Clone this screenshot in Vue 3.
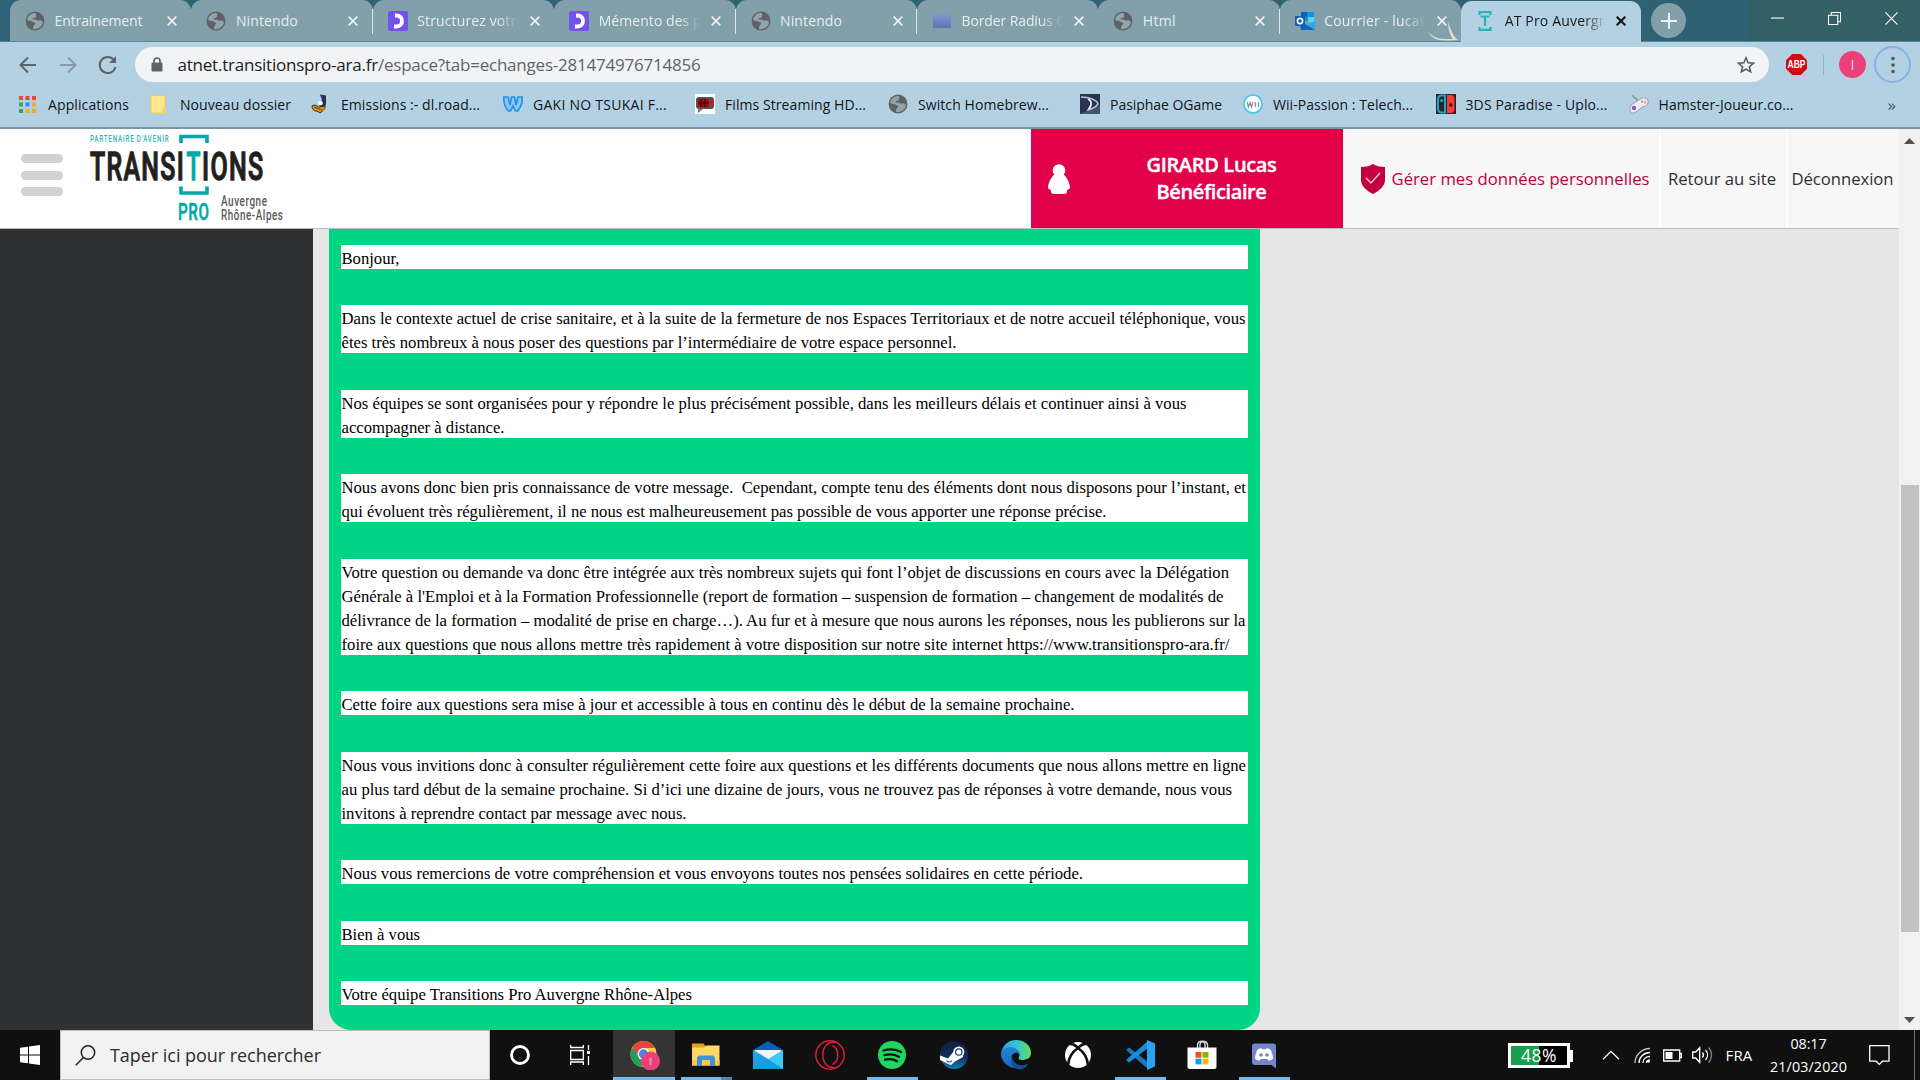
<script setup>
// Spreads letters so that a label takes exactly the given width in pixels.
const vFit = {
  mounted(el, { value }) {
    if (!value) return
    const natural = el.getBoundingClientRect().width
    el.style.letterSpacing = (value - natural) / el.textContent.length + 'px'
  },
}

const tabs = [
  { icon: 'globe', title: 'Entrainement', w: 88 },
  { icon: 'globe', title: 'Nintendo', w: 62 },
  { icon: 'oc', title: 'Structurez votre', w: 107 },
  { icon: 'oc', title: 'Mémento des p', w: 103 },
  { icon: 'globe', title: 'Nintendo', w: 62 },
  { icon: 'square', title: 'Border Radius G', w: 105 },
  { icon: 'globe', title: 'Html', w: 33 },
  { icon: 'outlook', title: 'Courrier - lucas.', w: 106 },
  { icon: 'at', title: 'AT Pro Auvergn', w: 103, active: true },
]

const bookmarks = [
  { icon: 'apps', label: 'Applications', w: 81, span: 132 },
  { icon: 'folder', label: 'Nouveau dossier', w: 111, span: 161 },
  { icon: 'duck', label: 'Emissions :- dl.road...', w: 139, span: 192 },
  { icon: 'w', label: 'GAKI NO TSUKAI F...', w: 134, span: 192 },
  { icon: 'film', label: 'Films Streaming HD...', w: 141, span: 193 },
  { icon: 'globe', label: 'Switch Homebrew...', w: 131, span: 192 },
  { icon: 'ogame', label: 'Pasiphae OGame', w: 112, span: 163 },
  { icon: 'wii', label: 'Wii-Passion : Telech...', w: 140, span: 192.5 },
  { icon: 'switch', label: '3DS Paradise - Uplo...', w: 142, span: 193 },
  { icon: 'pad', label: 'Hamster-Joueur.co...', w: 135, span: 170 },
]

const message = [
  [['Bonjour,', 58]],
  [
    ['Dans le contexte actuel de crise sanitaire, et à la suite de la fermeture de nos Espaces Territoriaux et de notre accueil téléphonique, vous', 904],
    ['êtes très nombreux à nous poser des questions par l’intermédiaire de votre espace personnel.', 615],
  ],
  [
    ['Nos équipes se sont organisées pour y répondre le plus précisément possible, dans les meilleurs délais et continuer ainsi à vous', 845],
    ['accompagner à distance.', 163],
  ],
  [
    ['Nous avons donc bien pris connaissance de votre message.\u00a0 Cependant, compte tenu des éléments dont nous disposons pour l’instant, et', 904.5],
    ['qui évoluent très régulièrement, il ne nous est malheureusement pas possible de vous apporter une réponse précise.', 765],
  ],
  [
    ['Votre question ou demande va donc être intégrée aux très nombreux sujets qui font l’objet de discussions en cours avec la Délégation', 887.5],
    ["Générale à l'Emploi et à la Formation Professionnelle (report de formation – suspension de formation – changement de modalités de", 882],
    ['délivrance de la formation – modalité de prise en charge…). Au fur et à mesure que nous aurons les réponses, nous les publierons sur la', 904],
    ['foire aux questions que nous allons mettre très rapidement à votre disposition sur notre site internet https://www.transitionspro-ara.fr/', 888],
  ],
  [['Cette foire aux questions sera mise à jour et accessible à tous en continu dès le début de la semaine prochaine.', 733]],
  [
    ['Nous vous invitions donc à consulter régulièrement cette foire aux questions et les différents documents que nous allons mettre en ligne', 904.5],
    ['au plus tard début de la semaine prochaine. Si d’ici une dizaine de jours, vous ne trouvez pas de réponses à votre demande, nous vous', 890.5],
    ['invitons à reprendre contact par message avec nous.', 345],
  ],
  [['Nous vous remercions de votre compréhension et vous envoyons toutes nos pensées solidaires en cette période.', 741.5]],
  [['Bien à vous', 78.5]],
  [['Votre équipe Transitions Pro Auvergne Rhône-Alpes', 350.5]],
]

const tasks = ['chrome', 'explorer', 'mail', 'opera', 'spotify', 'steam', 'edge', 'xbox', 'vscode', 'store', 'discord']
const running = ['spotify', 'vscode', 'discord']
</script>

<template>
  <div class="screen">
    <svg class="defs" width="0" height="0">
      <defs>
        <linearGradient id="gMail" x1="0" y1="0" x2="1" y2="1"><stop offset="0" stop-color="#22a6ea" /><stop offset="1" stop-color="#1b8fdd" /></linearGradient>
        <linearGradient id="gSteam" x1="0" y1="0" x2="0" y2="1"><stop offset="0" stop-color="#141a3c" /><stop offset=".6" stop-color="#0d3160" /><stop offset="1" stop-color="#1580b8" /></linearGradient>
        <linearGradient id="gEdge" x1="0" y1="0" x2="1" y2="0"><stop offset="0" stop-color="#2aa7e6" /><stop offset=".5" stop-color="#30c4d8" /><stop offset="1" stop-color="#64de5a" /></linearGradient>
        <linearGradient id="gEdge2" x1="0" y1="0" x2="0" y2="1"><stop offset="0" stop-color="#2187d4" /><stop offset="1" stop-color="#1668bd" /></linearGradient>
        <linearGradient id="gSq" x1="0" y1="0" x2="0" y2="1"><stop offset="0" stop-color="#8496d4" /><stop offset="1" stop-color="#5f74b0" /></linearGradient>
        <symbol id="i-globe" viewBox="0 0 18 18">
          <circle cx="9" cy="9" r="8.500" fill="#5f6164" />
          <path d="M9.500 1.800C6 1.500 2.300 4 1.900 8.100c1.400 1 3 .7 4.200 1 .8 1 2.300 1.200 3.200 1.800-.3 1.500-1.700 2-2 3.300l-.1 2c4.900 1 8.800-2.700 9-6.500-1.200-.3-1.600-1.600-2.700-1.400-1 .4-2 .7-3-.1-1.300-1.100-3 .1-3.800-1 .4-1.700 2.400-.8 3.100-1.900.3-1 .5-2.300-.3-3.500z" fill="#8fa4ab" />
        </symbol>
        <symbol id="i-oc" viewBox="0 0 20 20">
          <rect width="20" height="20" rx="2" fill="#7451eb" />
          <path d="M7 4.500h1.500c3.500 0 5.500 2.300 5.500 5.500s-2 5.500-5.500 5.500H6" fill="none" stroke="#fff" stroke-width="3.800" />
        </symbol>
        <symbol id="i-square" viewBox="0 0 20 20"><rect x="1" y="3" width="18" height="14" fill="url(#gSq)" /></symbol>
        <symbol id="i-outlook" viewBox="0 0 20 20">
          <path d="M6 1h13v9H6z" fill="#1490df" /><path d="M6 1h6v5H6z" fill="#0364b8" /><path d="M13 6h6v5h-6z" fill="#50d9ff" />
          <path d="M5 10l7.500 5L20 9.500V18H5z" fill="#28a8ea" /><path d="M5 10l15 9H6z" fill="#1067b5" /><rect y="5" width="10" height="10" rx="1" fill="#0f5fb5" />
          <circle cx="5" cy="10" r="2.600" fill="none" stroke="#fff" stroke-width="1.600" />
        </symbol>
        <symbol id="i-at" viewBox="0 0 20 20"><path d="M4.500 4V1.200h11V4M4.500 16v2.800h11V16M5.500 5.500h9M10 5.500V15" fill="none" stroke="#29b3b6" stroke-width="2.200" /></symbol>
        <symbol id="i-apps" viewBox="0 0 20 20">
          <path d="M1 2h4v4H1zM7.500 2h4v4h-4zM14 2h4v4h-4z" fill="#f4433c" /><path d="M1 8.500h4v4H1z" fill="#34a853" /><path d="M7.500 8.500h4v4h-4z" fill="#2c8cf4" />
          <path d="M14 8.500h4v4h-4zM14 15h4v4h-4zM7.500 15h4v4h-4z" fill="#fba91c" /><path d="M1 15h4v4H1z" fill="#34a853" />
        </symbol>
        <symbol id="i-folder" viewBox="0 0 20 20"><path d="M1 1.500h14v12l1 1V19H1z" fill="#ffe68f" stroke="#eecb5c" /><path d="M12.500 19v-4.500l3-1.500V19z" fill="#f3d16a" /></symbol>
        <symbol id="i-duck" viewBox="0 0 20 20">
          <path d="M9 .5l6 1v8c0 3-2 4-5 4-2-1-2-3-1-5l2-3z" fill="#2e2c53" /><circle cx="9.500" cy="9" r="2.300" fill="#fff" />
          <path d="M1 12c3-2 5 0 7 1l6-1c1 2-2 5-5 7-1-1-3-2-5-2-2-1-3-3-3-5z" fill="#d6941c" stroke="#46300b" /><path d="M3 13l8 3" stroke="#684713" />
        </symbol>
        <symbol id="i-w" viewBox="0 0 20 20"><path d="M1 3h4l2 8 1.500-8h3L13 11l2-8h4c1 5-2 12-4.500 14h-2L10 12l-2.500 5h-2C3 15 0 8 1 3z" fill="#8cc8f8" stroke="#2790e6" stroke-width="1.700" /></symbol>
        <symbol id="i-film" viewBox="0 0 20 20">
          <rect width="20" height="20" fill="#fff" /><rect x="1" y="3" width="18" height="12" rx="3" fill="#5a4e4e" /><path d="M3 14v5l5-4z" fill="#777" />
          <rect x="3" y="5" width="11" height="8" fill="#a10b15" /><path d="M6 5v8M10 5v8M3 9h11" stroke="#2b0508" /><path d="M15 8l4-3v8l-4-3z" fill="#cd1420" />
        </symbol>
        <symbol id="i-ogame" viewBox="0 0 20 20"><rect width="20" height="20" fill="#253551" /><path d="M0 20l20-9v9z" fill="#42536f" /><path d="M1 3c8 0 16 3 17 7-3 4-6 5-10 6l3-5" fill="none" stroke="#b9c6d6" stroke-width="1.500" /><path d="M8 5c4 2 4 6 1 10" fill="none" stroke="#e8eef5" stroke-width="1.800" /></symbol>
        <symbol id="i-wii" viewBox="0 0 20 20"><circle cx="10" cy="10" r="9" fill="#fff" stroke="#37c8f1" stroke-width="1.600" /><path d="M4 8l1.500 5L7 8.500 8.500 13 10 8M12.500 8v5M15.500 8v5" fill="none" stroke="#858d90" stroke-width="1.200" /></symbol>
        <symbol id="i-switch" viewBox="0 0 20 20">
          <rect width="20" height="20" fill="#2b2422" /><path d="M9 1.500H5.500A3.500 3.500 0 0 0 2 5v10a3.500 3.500 0 0 0 3.500 3.500H9z" fill="none" stroke="#18a9d0" stroke-width="2" />
          <path d="M11 1h3.500A4 4 0 0 1 18.500 5v10a4 4 0 0 1-4 4H11z" fill="#fb3b32" /><circle cx="5.700" cy="6.500" r="1.500" fill="#18a9d0" /><circle cx="14.700" cy="11" r="1.800" fill="#2b2422" />
        </symbol>
        <symbol id="i-pad" viewBox="0 0 20 20">
          <path d="M4 1c-1 4 5 2 4 6" fill="none" stroke="#8b9499" stroke-width="1.400" /><path d="M2 11l11-7c4-1 7 2 6 5-1 3-3 3.500-5 3.500l-7 5.500c-3 2-6 1-6-2 0-2 0-4 1-5z" fill="#ececf0" stroke="#9a9da8" />
          <circle cx="5" cy="14" r="2.200" fill="#7869ad" /><circle cx="13" cy="7.500" r="1.200" fill="#ef9270" /><circle cx="16" cy="8.500" r="1.200" fill="#c9a3a3" />
        </symbol>

        <symbol id="t-chrome" viewBox="0 0 30 30">
          <circle cx="13.500" cy="14" r="13" fill="#fdcf3a" /><path d="M2 8a13 13 0 0 0 9.500 19L17 17z" fill="#1fa05c" />
          <path d="M2.500 7l5.500 9 5-8h12a13 13 0 0 0-22.500-1z" fill="#e0483c" /><circle cx="13.500" cy="14" r="6" fill="#fff" /><circle cx="13.500" cy="14" r="4.700" fill="#4587ee" />
          <circle cx="20.500" cy="21" r="9.500" fill="#ec407a" /><path d="M20.500 17.500v7.500" stroke="#f58fb2" stroke-width="2" />
        </symbol>
        <symbol id="t-explorer" viewBox="0 0 30 30">
          <path d="M1 3.500h11.500l2 2.500v4H1z" fill="#e0a012" /><path d="M1 7.500h12l2-2h13.500v20H1z" fill="#ffd766" /><path d="M1 20h27.500v5.500H1z" fill="#f8c84c" />
          <path d="M6 26v-8.500l2-2h14l2 2V26h-5v-6h-8v6z" fill="#3d92d6" />
        </symbol>
        <symbol id="t-mail" viewBox="0 0 30 30"><path d="M0 10L15 1l15 9v10H0z" fill="#0b5fad" /><path d="M2 10h26v11H2z" fill="#f4f4f4" /><path d="M0 10l15 9 15-9v19H0z" fill="#3fc8f6" /><path d="M0 10l15 9 15 10H0z" fill="url(#gMail)" /></symbol>
        <symbol id="t-opera" viewBox="0 0 30 30"><g fill="none" stroke="#df1b40" stroke-width="1.500"><circle cx="15" cy="15" r="14.200" /><path d="M20.500 2.500C13 1 7.800 7 7.800 15s5.200 14 12.700 12.500" /><path d="M17.500 5.500c7 3.500 7 15.500 0 19" /></g></symbol>
        <symbol id="t-spotify" viewBox="0 0 30 30"><circle cx="15" cy="15" r="14" fill="#1fd65f" /><path d="M6.500 10.500c6-1.700 12.500-1.200 17.500 1.500M7.500 15.200c5-1.400 10.500-.9 14.500 1.600M8 19.700c4.500-1 8.500-.6 12 1.500" fill="none" stroke="#101010" stroke-width="2.300" stroke-linecap="round" /></symbol>
        <symbol id="t-steam" viewBox="0 0 30 30">
          <circle cx="15" cy="15" r="14" fill="url(#gSteam)" /><path d="M1 15.500l8 3L15 11h9v6l-8 4.500-4 3.500-3-1L1 20z" fill="#fff" />
          <circle cx="19.800" cy="12" r="5.500" fill="#fff" /><circle cx="19.800" cy="12" r="3.800" fill="#193b66" /><circle cx="19.800" cy="12" r="2.600" fill="#fff" /><path d="M7.500 20.500c1 2 4 2.500 5.500 0" fill="none" stroke="#17609b" stroke-width="1.200" />
        </symbol>
        <symbol id="t-edge" viewBox="0 0 30 30">
          <path d="M0 14C1 6 7 0 15 0c9 0 15 6 15 13 0 5-4 7-9 7-3 0-4-1-3-3 2-5-3-9-8-9-4 0-8 2-10 6z" fill="url(#gEdge)" />
          <path d="M0 15c0-5 4-8 9-8 5 0 9 3 9.500 7-4-3-8 0-8 4 0 6 6 9 12 8A15 15 0 0 1 0 15z" fill="url(#gEdge2)" /><path d="M11 16c-3 6 1 14 9 13.500 3-.5 6-3 7-6-7 4-15 1-16-7.500z" fill="#104f9c" />
        </symbol>
        <symbol id="t-xbox" viewBox="0 0 30 30"><circle cx="15" cy="15" r="13" fill="#fff" /><path d="M6.500 4c3-.5 6 1.500 8.500 4 2.500-2.500 5.500-4.500 8.500-4M15 8C9 12 5.500 18 5 25.500M15 8c6 4 9.500 10 10 17.500" fill="none" stroke="#101010" stroke-width="2.600" /></symbol>
        <symbol id="t-vscode" viewBox="0 0 30 30"><path d="M1 10l3-2.500L23 22v7z" fill="#1579bd" /><path d="M1 20l3 2.500L23 8V1z" fill="#1a8bd6" /><path d="M22 0l8 3.500v23L22 30z" fill="#2aa4f0" /></symbol>
        <symbol id="t-store" viewBox="0 0 30 30">
          <path d="M10.500 9V5c0-5 10-5 10 0v4M13 8V4c1-3 5-3 5 1v3" fill="none" stroke="#d4d4d4" stroke-width="1.400" /><path d="M.5 7.500h29V27a2 2 0 0 1-2 2h-25a2 2 0 0 1-2-2z" fill="#fff" />
          <path d="M8.500 12h6v5.700h-6z" fill="#f25022" /><path d="M15.500 12h6v5.700h-6z" fill="#7fba00" /><path d="M8.500 18.700h6v5.700h-6z" fill="#00a4ef" /><path d="M15.500 18.700h6v5.700h-6z" fill="#ffb900" />
        </symbol>
        <symbol id="t-discord" viewBox="0 0 30 30">
          <path d="M6 3.500h18a3 3 0 0 1 3 3v22L22.500 25H6a3 3 0 0 1-3-3V6.500a3 3 0 0 1 3-3z" fill="#7385cb" />
          <path d="M6 18.500c0-4 1.500-7 2.500-9 1.500-1 3-1.300 4-1.300l.5 1h4l.5-1c1 0 2.500.3 4 1.300 1 2 2.500 5 2.500 9-1.500 1.500-3 2.200-4.500 2.200L18.500 19h-7l-1 1.700c-1.500 0-3-.7-4.500-2.200z" fill="#fff" /><circle cx="12" cy="15" r="1.800" fill="#7385cb" /><circle cx="18" cy="15" r="1.800" fill="#7385cb" />
        </symbol>
      </defs>
    </svg>

    <div class="tabstrip">
      <div v-for="(t, i) in tabs" :key="i" class="tab" :class="{ active: t.active, nosep: i === 7 }">
        <svg class="tab-icon"><use :href="'#i-' + t.icon" /></svg>
        <div class="tab-title" :class="{ faded: t.w > 100 }"><span v-fit="t.w">{{ t.title }}</span></div>
        <svg class="tab-x" viewBox="0 0 10 10"><path d="M.7.700l8.600 8.600M9.300.7L.7 9.300" /></svg>
        <svg v-if="i === 7" class="feather" viewBox="0 0 32 22"><path d="M1 12c6 7 14 7 25 7C23 15 21 9 21 2c3 8 5 14 10 18-12 1-25 2-30-8z" fill="#e6ddca" /></svg>
      </div>
      <div class="newtab"><svg viewBox="0 0 16 16" width="16" height="16"><path d="M8 0v16M0 8h16" stroke="#eef3f4" stroke-width="2" /></svg></div>
      <div class="winctl">
        <svg viewBox="0 0 14 14"><path d="M0 6.500h14" /></svg>
        <svg viewBox="0 0 14 14"><path d="M.5 3.500h10v10H.5zM3.500 3V.5h10v10H11" /></svg>
        <svg viewBox="0 0 14 14"><path d="M.5.500l13 13M13.500.5l-13 13" /></svg>
      </div>
    </div>

    <div class="toolbar">
      <svg class="nav" viewBox="0 0 20 20"><path d="M18 10H3M10 2.500L2.500 10l7.500 7.500" /></svg>
      <svg class="nav off" viewBox="0 0 20 20"><path d="M2 10h15M10 2.500l7.500 7.500-7.500 7.500" /></svg>
      <svg class="nav" viewBox="0 0 20 20"><path d="M16 5A8 8 0 1 0 17.500 12" /><path d="M18 1v7h-7z" fill="#5c6468" stroke="none" /></svg>
      <div class="omnibox">
        <svg width="12" height="15" viewBox="0 0 12 15"><path d="M3 6V4a3 3 0 0 1 6 0v2" fill="none" stroke="#5f6368" stroke-width="1.700" /><rect x=".5" y="5.500" width="11" height="9" rx="1.200" fill="#5f6368" /></svg>
        <span v-fit="523" class="url"><b>atnet.transitionspro-ara.fr</b>/espace?tab=echanges-281474976714856</span>
        <svg class="star" width="18" height="18" viewBox="0 0 18 18"><path d="M9 1.800l2.100 5 5.400.4-4.100 3.500 1.300 5.300L9 13.100 4.300 16l1.300-5.300-4.100-3.500 5.400-.4z" fill="none" stroke="#54585c" stroke-width="1.500" /></svg>
      </div>
      <svg class="abp" width="21" height="21" viewBox="0 0 21 21"><path d="M6.200 0h8.600L21 6.200v8.600L14.800 21H6.200L0 14.800V6.200z" fill="#d20a12" /><text x="10.500" y="14.400" text-anchor="middle" textLength="18" lengthAdjust="spacingAndGlyphs">ABP</text></svg>
      <i class="bar"></i>
      <div class="avatar">I</div>
      <div class="menu"><svg width="4" height="18" viewBox="0 0 4 18" fill="#50585c"><circle cx="2" cy="2.500" r="1.800" /><circle cx="2" cy="9" r="1.800" /><circle cx="2" cy="15.500" r="1.800" /></svg></div>
    </div>

    <div class="bookmarks">
      <div v-for="b in bookmarks" :key="b.label" class="bm" :style="{ width: b.span + 'px' }">
        <svg width="20" height="20"><use :href="'#i-' + b.icon" /></svg><span v-fit="b.w">{{ b.label }}</span>
      </div>
      <span class="more">»</span>
    </div>

    <div class="page">
      <div class="main">
        <header>
          <div class="burger"><i></i><i></i><i></i></div>
          <svg class="logo" width="200" height="92" viewBox="0 0 200 92">
            <g font-family="Roboto, sans-serif">
              <text x="5" y="9.800" font-size="8.800" font-weight="500" letter-spacing="1.200" fill="#2bb4b4" textLength="79.500" lengthAdjust="spacingAndGlyphs">PARTENAIRE D'AVENIR</text>
              <g font-size="38" font-weight="500" letter-spacing="2">
                <text x="5" y="47.500" fill="#231f20" stroke="#231f20" stroke-width="1.300" textLength="95" lengthAdjust="spacingAndGlyphs">TRANSI</text>
                <text x="101.500" y="47.500" fill="#00a9a8" stroke="#00a9a8" stroke-width="1.300" textLength="15" lengthAdjust="spacingAndGlyphs">T</text>
                <text x="117" y="47.500" fill="#231f20" stroke="#231f20" stroke-width="1.300" textLength="62.500" lengthAdjust="spacingAndGlyphs">IONS</text>
              </g>
              <text x="93" y="88" font-size="23.500" font-weight="500" letter-spacing="1" fill="#00a9a8" stroke="#00a9a8" stroke-width=".6" textLength="31.500" lengthAdjust="spacingAndGlyphs">PRO</text>
              <g font-size="14" font-weight="500" letter-spacing=".8" fill="#58585a">
                <text x="136" y="74" textLength="46.500" lengthAdjust="spacingAndGlyphs">Auvergne</text>
                <text x="136" y="88" textLength="62.500" lengthAdjust="spacingAndGlyphs">Rhône-Alpes</text>
              </g>
            </g>
            <path d="M96 11V4.500h26V11M96 54.500V61h26v-6.500" fill="none" stroke="#00a9a8" stroke-width="3.600" />
          </svg>
          <div class="user">
            <svg width="22" height="30" viewBox="0 0 22 30"><circle cx="11" cy="6.500" r="6.300" fill="#fff" /><path d="M7 10h8c4 3 7 9 7 14-1 2-3 1-3 3 0 2-1 3-3 3H6c-2 0-3-1-3-3 0-2-2-1-3-3 0-5 3-11 7-14z" fill="#fff" /></svg>
            <div class="who"><span v-fit="130">GIRARD Lucas</span><br /><span v-fit="110">Bénéficiaire</span></div>
          </div>
          <div class="link gerer">
            <svg width="24" height="30" viewBox="0 0 24 30"><path d="M12 0c3 2 7 3 12 3v13c0 6-6 11-12 14C6 27 0 22 0 16V3c5 0 9-1 12-3z" fill="#c2003d" /><path d="M5 14l5 5 9-10" fill="none" stroke="#f3ccd9" stroke-width="1.500" /></svg>
            <span v-fit="258">Gérer mes données personnelles</span>
          </div>
          <div class="link retour"><span v-fit="108">Retour au site</span></div>
          <div class="link deco"><span v-fit="102">Déconnexion</span></div>
        </header>
        <div class="body">
          <aside></aside>
          <article>
            <p v-for="(para, i) in message" :key="i">
              <span v-for="line in para" :key="line[0]" class="line"><span v-fit="line[1]">{{ line[0] }}</span></span>
            </p>
          </article>
        </div>
      </div>
      <div class="scroll">
        <svg width="11" height="6" viewBox="0 0 11 6"><path d="M0 6L5.500 0 11 6z" /></svg>
        <i></i>
        <svg width="11" height="6" viewBox="0 0 11 6"><path d="M0 0l5.500 6L11 0z" /></svg>
      </div>
    </div>

    <div class="taskbar">
      <div class="start"><svg width="20" height="20" viewBox="0 0 20 20" fill="#fff"><path d="M0 2.800l8-1.100v7.800H0zM9 1.500L20 0v9.500H9zM0 10.500h8v7.800l-8-1.100zM9 10.500h11V20L9 18.500z" /></svg></div>
      <div class="search">
        <svg width="21" height="21" viewBox="0 0 21 21" fill="none" stroke="#222" stroke-width="1.500"><circle cx="13" cy="7.500" r="6.700" /><path d="M8.500 12.500L.7 20.300" /></svg>
        <span v-fit="211">Taper ici pour rechercher</span>
      </div>
      <div class="sys"><svg width="20" height="20" viewBox="0 0 20 20"><circle cx="10" cy="10" r="8.500" fill="none" stroke="#fff" stroke-width="2.800" /></svg></div>
      <div class="sys tv"><svg width="20" height="20" viewBox="0 0 20 20" fill="none" stroke="#fff" stroke-width="1.300"><path d="M.7 5.500h12.600v9H.7zM.7 0v2.500h12.600V0M.7 20v-3h12.600v3M18.500 0v5M18.500 11v9" /><path d="M17 6h3v3h-3z" fill="#fff" stroke="none" /></svg></div>
      <div v-for="t in tasks" :key="t" class="task" :class="[t, { run: running.includes(t) }]"><svg width="30" height="30"><use :href="'#t-' + t" /></svg></div>
      <div class="tray">
        <div class="batt"><span v-fit="36">48%</span></div>
        <svg class="chev" width="18" height="10" viewBox="0 0 18 10"><path d="M1 9.300l8-8 8 8" /></svg>
        <svg class="wifi" width="17" height="17" viewBox="0 0 17 17"><path d="M1 16C1 8 8 1.500 16 1.500" opacity=".75" /><path d="M5 16C5 10 10 5.500 16 5.500M9 16c0-4 3-6.500 7-6.500M12.500 16c0-2 1.500-3 3.500-3" /><circle cx="14.500" cy="14.500" r="1.300" fill="#fff" stroke="none" /></svg>
        <svg class="bat2" width="19" height="13" viewBox="0 0 19 13"><path d="M.7 1h16v11H.7zM17 4.500h1.400v4H17" /><path d="M2.500 3h7v7h-7z" fill="#fff" stroke="none" /></svg>
        <svg class="vol" width="21" height="18" viewBox="0 0 21 18"><path d="M.7 6h3l4-4.300v14.600l-4-4.300h-3zM10.500 6.500c1.200 1.500 1.200 3.500 0 5M13.500 4c2.700 3 2.700 7 0 10" /><path d="M16.500 1.500c4 4 4 11 0 15" opacity=".45" /></svg>
        <span class="lang"><span v-fit="27">FRA</span></span>
        <div class="clock"><span v-fit="36">08:17</span><span v-fit="77">21/03/2020</span></div>
        <svg class="notif" width="21" height="21" viewBox="0 0 21 21"><path d="M.7.700h19.300v15.500h-6.500l-3.200 3.200-3.200-3.200H.7z" /></svg>
        <i class="peek"></i>
      </div>
    </div>
  </div>
</template>

<style>
body { margin: 0; overflow: hidden; }
</style>

<style scoped>
.screen { width: 1920px; height: 1080px; display: flex; flex-direction: column; overflow: hidden; font-family: "Open Sans", sans-serif; white-space: nowrap; }
.defs { position: absolute; }
.screen svg { flex: none; display: block; }
[class] > span { display: inline-block; }

.tabstrip { flex: none; height: 42px; box-sizing: border-box; display: flex; padding-left: 10px; background: linear-gradient(90deg, #2f6377, #2e6274 85%, #2f6272); border-bottom: 1px solid #568891; }
.tab { position: relative; flex: none; width: 181.400px; height: 41px; display: flex; align-items: center; box-sizing: border-box; padding-left: 15px; background: #82a0aa; border-radius: 11px 11px 0 0; color: #e6edef; font-size: 14px; }
.tab::after { content: ""; position: absolute; right: -1px; top: 9px; width: 1.500px; height: 25px; background: #dde5e8; }
.tab.active::after, .tab.nosep::after { display: none; }
.tab.active { background: #b4d1e4; color: #15191b; margin-top: 1px; width: 180px; padding: 0 0 2px 13.500px; }
.tab-icon { width: 20px; height: 20px; }
.tab-title { width: 102px; overflow: hidden; margin-left: 9.500px; line-height: 22px; }
.active .tab-title { margin-left: 10px; width: 101px; }
.tab-title span { display: inline-block; }
.faded { -webkit-mask-image: linear-gradient(90deg, #000 78%, transparent); mask-image: linear-gradient(90deg, #000 78%, transparent); }
.tab-x { width: 10px; height: 10px; margin-left: 10.500px; fill: none; stroke: #eef2f3; stroke-width: 1.700; }
.active .tab-x { stroke: #111; stroke-width: 2; margin-left: 10px; }
.feather { position: absolute; right: 2px; top: 20px; width: 32px; height: 22px; }
.newtab { width: 35px; height: 35px; margin: 3px 0 0 10px; border-radius: 50%; background: #82a0aa; display: flex; align-items: center; justify-content: center; }
.winctl { margin-left: auto; width: 171px; display: flex; background: #336065; align-items: center; padding-bottom: 4px; }
.winctl svg { width: 13px; height: 13px; margin: 0 22px; fill: none; stroke: #fff; stroke-width: 1.200; }

.toolbar { flex: none; height: 46px; box-sizing: border-box; padding-bottom: 1px; display: flex; align-items: center; background: #b4d1e4; padding-left: 18px; }
.nav { width: 20px; height: 20px; margin-right: 20px; fill: none; stroke: #5c6468; stroke-width: 2; }
.nav.off { stroke: #8b9ba4; }
.omnibox { width: 1634px; height: 35px; box-sizing: border-box; border-radius: 18px; background: #f1f3f4; margin-left: -3px; padding: 0 14px 0 16px; display: flex; align-items: center; font-size: 17px; color: #5f6368; }
.url { margin-left: 14.500px; line-height: 30px; }
.url b { font-weight: 400; color: #202124; }
.star { margin-left: auto; }
.abp { margin-left: 17px; font: bold 10.500px "Liberation Sans", sans-serif; fill: #fff; }
.bar { width: 1px; height: 20px; background: #93b0c4; margin: 0 15px 0 16px; }
.avatar { width: 27px; height: 27px; border-radius: 50%; background: #ec407a; color: #fbd5e1; font-size: 14px; line-height: 27px; text-align: center; }
.menu { width: 33px; height: 33px; border: 2px solid #84b2e6; border-radius: 50%; margin-left: 8px; display: flex; align-items: center; justify-content: center; }

.bookmarks { flex: none; height: 41px; box-sizing: border-box; display: flex; padding: 0 0 7px 18px; align-items: center; background: #b4d1e4; border-bottom: 2px solid #7b94a3; font-size: 14px; color: #111618; }
.bm { flex: none; display: flex; align-items: center; }
.bm span { margin-left: 10px; }
.more { margin-left: auto; margin-right: 24px; font-size: 17px; color: #4a555b; }

.page { flex: 1; display: flex; min-height: 0; }
.main { width: 1899px; display: flex; flex-direction: column; }
header { flex: none; height: 100px; box-sizing: border-box; border-bottom: 1px solid #bcbcbc; background: #fff; display: flex; }
.burger { width: 42px; margin: 25px 0 0 21px; }
.burger i { display: block; height: 9px; border-radius: 4.500px; background: #d2d2d2; margin-bottom: 7.500px; }
.logo { margin: 3px 0 0 22px; }
.user { width: 312px; margin-left: auto; background: #e3004b; display: flex; align-items: center; color: #fff; font-weight: 600; font-size: 20px; line-height: 27px; }
.user svg { margin-left: 17px; }
.who { flex: 1; text-align: center; padding: 0 0 1px 10px; -webkit-text-stroke: .4px #fff; }
.who span { display: inline-block; }
.link { box-sizing: border-box; background: #f7f7f7; display: flex; align-items: center; font-size: 16.700px; color: #2c3138; }
.gerer { width: 316px; padding-left: 18px; color: #bd003e; }
.gerer span { margin-left: 6.500px; }
.retour { width: 127px; padding-left: 7px; border-left: 2px solid #fff; box-sizing: border-box; }
.deco { width: 113px; border-left: 2px solid #fff; padding-left: 3.500px; }
.body { flex: 1; display: flex; min-height: 0; background: #e6e6e6; }
aside { width: 313px; background: #303133; }
article { margin-left: 16px; width: 931px; box-sizing: border-box; padding: 16px 12px 0; background: #00d586; border-radius: 0 0 22px 22px; display: flex; flex-direction: column; gap: 36.440px; color: #000; font: 16.670px/24px "Liberation Serif", serif; }
p { margin: 0; background: #fff; }
.line { display: block; height: 24px; padding-top: 2px; box-sizing: border-box; }
.line span { display: inline-block; margin-left: .5px; }
.scroll { width: 21px; background: #f1f1f1; display: flex; flex-direction: column; align-items: center; fill: #505050; padding: 9px 0 7px; box-sizing: border-box; }
.scroll i { width: 18px; height: 447px; margin: 341px 0 auto; background: #c1c1c1; }

.taskbar { flex: none; height: 50px; background: #101010; display: flex; }
.start { width: 60px; display: flex; align-items: center; justify-content: center; }
.search { width: 430px; box-sizing: border-box; background: #f2f2f2; border: 1px solid #bdbdbd; display: flex; align-items: center; padding-left: 14px; font-size: 18px; color: #2c2c2c; }
.search span { margin-left: 14px; }
.sys { width: 60px; display: flex; align-items: center; justify-content: center; }
.tv { width: 60px; margin-right: 3px; }
.task { position: relative; width: 62px; display: flex; align-items: center; justify-content: center; }
.chrome { background: #343434; box-shadow: inset 0 -3px #76b9ed; }
.run::after, .explorer::after { content: ""; position: absolute; left: 5.500px; right: 5.500px; bottom: 0; height: 3px; background: #76b9ed; }
.explorer::after { background: linear-gradient(90deg, #76b9ed 78%, #5586ae 78%); }
.task svg { margin-left: -1px; }
.task.chrome svg { margin-left: 1px; }
.tray { flex: 1; display: flex; align-items: center; padding-left: 213px; color: #fff; fill: none; stroke-width: 1.300; }
.tray svg { stroke: #fff; }
.tray span { display: inline-block; }
.batt { position: relative; width: 56px; height: 19px; border: 3px solid #fff; background: linear-gradient(90deg, #1a9e4b 50%, #000 50%); font-size: 17.500px; line-height: 19px; text-align: center; }
.batt::after { content: ""; position: absolute; right: -6px; top: 4px; width: 3px; height: 12px; background: #fff; }
.chev { margin-left: 32px; }
.wifi { margin-left: 13.500px; }
.bat2 { margin-left: 12px; }
.vol { margin-left: 10px; }
.lang { margin-left: 13px; font-size: 15px; width: 27px; }
.clock { width: 78px; margin-left: 17px; display: flex; flex-direction: column; align-items: center; font-size: 14.300px; line-height: 23px; }
.notif { margin-left: 21.500px; }
.peek { width: 1px; height: 50px; background: #6a6a6a; margin-left: 24px; }
</style>
